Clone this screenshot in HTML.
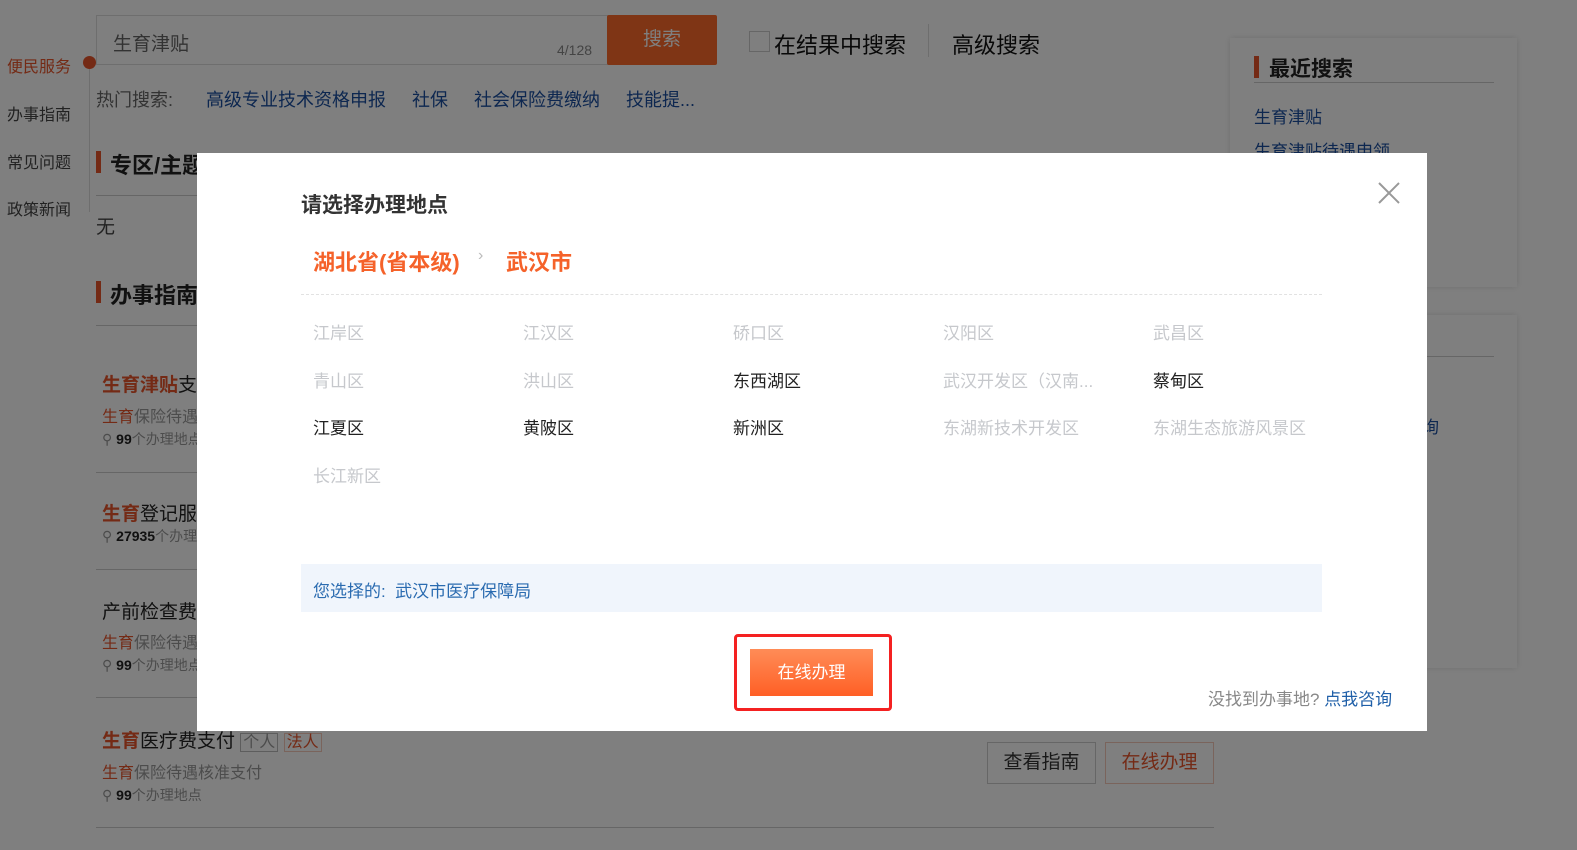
<!DOCTYPE html>
<html><head><meta charset="utf-8">
<style>
*{margin:0;padding:0;box-sizing:border-box}
body{width:1577px;height:850px;overflow:hidden;position:relative;background:#fff;font-family:"Liberation Sans","Noto Sans CJK SC",sans-serif;color:#333}
.a{position:absolute;white-space:nowrap}
.or{color:#e8542a}
.ov{position:absolute;left:0;top:0;width:1577px;height:850px;background:rgba(0,0,0,.5)}
.m{position:absolute;left:197px;top:153px;width:1230px;height:578px;background:#fff}
.d{position:absolute;font-size:17px;color:#c6c8cc;white-space:nowrap;line-height:20px}
.d.k{color:#222}
</style></head><body>
<div class="a" style="left:96px;top:15px;width:512px;height:50px;border:1px solid #ddd;background:#fff"></div>
<div class="a" style="left:113px;top:29px;font-size:19px;color:#666">生育津贴</div>
<div class="a" style="left:557px;top:42px;font-size:14px;color:#888">4/128</div>
<div class="a" style="left:607px;top:15px;width:110px;height:50px;background:#ff6a2a;color:#fff;font-size:19px;text-align:center;line-height:50px;border-radius:2px">搜索</div>
<div class="a" style="left:749px;top:31px;width:21px;height:21px;border:1px solid #ccc"></div>
<div class="a" style="left:774px;top:28px;font-size:22px;color:#111">在结果中搜索</div>
<div class="a" style="left:928px;top:24px;width:1px;height:33px;background:#ddd"></div>
<div class="a" style="left:952px;top:28px;font-size:22px;color:#111">高级搜索</div>
<div class="a" style="left:96px;top:86px;font-size:18px;color:#666">热门搜索:</div>
<div class="a" style="left:206px;top:86px;font-size:18px;color:#1b4fa0;word-spacing:8px">高级专业技术资格申报&nbsp; 社保&nbsp; 社会保险费缴纳&nbsp; 技能提...</div>
<div class="a" style="left:89px;top:62px;width:1px;height:150px;background:#ddd"></div>
<div class="a or" style="left:7px;top:53px;font-size:16px">便民服务</div>
<div class="a" style="left:83px;top:56px;width:13px;height:13px;border-radius:50%;background:#e8542a"></div>
<div class="a" style="left:7px;top:101px;font-size:16px;color:#444">办事指南</div>
<div class="a" style="left:7px;top:149px;font-size:16px;color:#444">常见问题</div>
<div class="a" style="left:7px;top:196px;font-size:16px;color:#444">政策新闻</div>
<div class="a" style="left:96px;top:151px;width:5px;height:22px;background:#e8542a"></div>
<div class="a" style="left:110px;top:148px;font-size:22px;font-weight:bold;color:#222">专区/主题</div>
<div class="a" style="left:96px;top:195px;width:120px;height:1px;background:#ccc"></div>
<div class="a" style="left:96px;top:212px;font-size:19px;color:#444">无</div>
<div class="a" style="left:96px;top:281px;width:5px;height:22px;background:#e8542a"></div>
<div class="a" style="left:110px;top:278px;font-size:22px;font-weight:bold;color:#222">办事指南</div>
<div class="a" style="left:96px;top:325px;width:1118px;height:1px;background:#ccc"></div>
<div class="a" style="left:102px;top:370px;font-size:19px;color:#222"><b class="or">生育津贴</b>支</div>
<div class="a" style="left:102px;top:403px;font-size:16px;color:#999"><b class="or" style="font-weight:normal">生育</b>保险待遇</div>
<div class="a" style="left:102px;top:429px;font-size:14px;color:#999">⚲ <b style="color:#222">99</b>个办理地点</div>
<div class="a" style="left:96px;top:472px;width:1118px;height:1px;background:#ccc"></div>
<div class="a" style="left:102px;top:499px;font-size:19px;color:#222"><b class="or">生育</b>登记服</div>
<div class="a" style="left:102px;top:526px;font-size:14px;color:#999">⚲ <b style="color:#222">27935</b>个办理</div>
<div class="a" style="left:96px;top:569px;width:1118px;height:1px;background:#ccc"></div>
<div class="a" style="left:102px;top:597px;font-size:19px;color:#222">产前检查费</div>
<div class="a" style="left:102px;top:629px;font-size:16px;color:#999"><span class="or">生育</span>保险待遇</div>
<div class="a" style="left:102px;top:655px;font-size:14px;color:#999">⚲ <b style="color:#222">99</b>个办理地点</div>
<div class="a" style="left:96px;top:697px;width:1118px;height:1px;background:#ccc"></div>
<div class="a" style="left:102px;top:726px;font-size:19px;color:#222"><b class="or">生育</b>医疗费支付 <span style="border:1px solid #bbb;color:#999;font-size:16px;padding:0 2px">个人</span> <span style="border:1px solid #f5c8b8;color:#e8542a;font-size:16px;padding:0 2px">法人</span></div>
<div class="a" style="left:102px;top:759px;font-size:16px;color:#999"><span class="or">生育</span>保险待遇核准支付</div>
<div class="a" style="left:102px;top:785px;font-size:14px;color:#999">⚲ <b style="color:#222">99</b>个办理地点</div>
<div class="a" style="left:987px;top:742px;width:109px;height:42px;border:1px solid #ccc;font-size:19px;color:#333;text-align:center;line-height:40px">查看指南</div>
<div class="a" style="left:1105px;top:742px;width:109px;height:42px;border:1px solid #f5c8b8;font-size:19px;color:#e8542a;text-align:center;line-height:40px">在线办理</div>
<div class="a" style="left:96px;top:827px;width:1118px;height:1px;background:#ccc"></div>
<div class="a" style="left:1230px;top:38px;width:287px;height:249px;background:#fff;box-shadow:0 0 6px rgba(0,0,0,.12)"></div>
<div class="a" style="left:1254px;top:56px;width:5px;height:22px;background:#e8542a"></div>
<div class="a" style="left:1269px;top:53px;font-size:21px;font-weight:bold;color:#222">最近搜索</div>
<div class="a" style="left:1254px;top:82px;width:240px;height:1px;background:#ccc"></div>
<div class="a" style="left:1254px;top:103px;font-size:17px;color:#1b4fa0">生育津贴</div>
<div class="a" style="left:1254px;top:137px;font-size:17px;color:#1b4fa0">生育津贴待遇申领</div>
<div class="a" style="left:1230px;top:315px;width:287px;height:353px;background:#fff;box-shadow:0 0 6px rgba(0,0,0,.12)"></div>
<div class="a" style="left:1254px;top:356px;width:240px;height:1px;background:#ccc"></div>
<div class="a" style="left:1422px;top:413px;font-size:17px;color:#1b4fa0">询</div>
<div class="ov"></div>
<div class="m">
<div class="a" style="left:104px;top:36px;font-size:21px;font-weight:bold;color:#333">请选择办理地点</div>
<svg class="a" style="left:1181px;top:29px" width="22" height="22"><path d="M1 1L21 21M21 1L1 21" stroke="#999" stroke-width="2"/></svg>
<div class="a" style="left:116px;top:92px;font-size:22px;font-weight:bold;color:#f5622a">湖北省(省本级)</div>
<div class="a" style="left:281px;top:94px;font-size:16px;color:#bbb">›</div>
<div class="a" style="left:309px;top:92px;font-size:22px;font-weight:bold;color:#f5622a">武汉市</div>
<div class="a" style="left:104px;top:141px;width:1021px;border-top:1px dashed #e2e2e2"></div>
<div class="d" style="left:116px;top:171px">江岸区</div>
<div class="d" style="left:326px;top:171px">江汉区</div>
<div class="d" style="left:536px;top:171px">硚口区</div>
<div class="d" style="left:746px;top:171px">汉阳区</div>
<div class="d" style="left:956px;top:171px">武昌区</div>
<div class="d" style="left:116px;top:219px">青山区</div>
<div class="d" style="left:326px;top:219px">洪山区</div>
<div class="d k" style="left:536px;top:219px">东西湖区</div>
<div class="d" style="left:746px;top:219px">武汉开发区（汉南...</div>
<div class="d k" style="left:956px;top:219px">蔡甸区</div>
<div class="d k" style="left:116px;top:266px">江夏区</div>
<div class="d k" style="left:326px;top:266px">黄陂区</div>
<div class="d k" style="left:536px;top:266px">新洲区</div>
<div class="d" style="left:746px;top:266px">东湖新技术开发区</div>
<div class="d" style="left:956px;top:266px">东湖生态旅游风景区</div>
<div class="d" style="left:116px;top:314px">长江新区</div>
<div class="a" style="left:104px;top:411px;width:1021px;height:48px;background:#f0f5fc"></div>
<div class="a" style="left:116px;top:424px;font-size:17px;color:#2a6bb0">您选择的:&nbsp;&nbsp;武汉市医疗保障局</div>
<div class="a" style="left:537px;top:481px;width:158px;height:77px;border:3px solid #f42121;border-radius:4px"></div>
<div class="a" style="left:553px;top:496px;width:123px;height:47px;background:linear-gradient(#ff8c57,#ff5f25);color:#fff;font-size:17px;text-align:center;line-height:47px">在线办理</div>
<div class="a" style="left:1011px;top:532px;font-size:17px;color:#888">没找到办事地?&nbsp;<span style="color:#1f5fa8">点我咨询</span></div>
</div>
</body></html>
